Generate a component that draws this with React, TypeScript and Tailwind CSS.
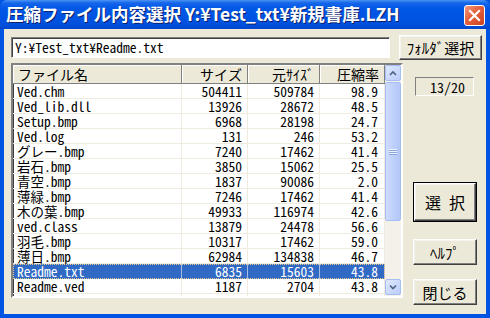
import type { ReactNode } from 'react'

type Row = { name: string; size: string; orig: string; rate: string; selected?: boolean }

const ROWS: Row[] = [
  { name: 'Ved.chm', size: '504411', orig: '509784', rate: '98.9' },
  { name: 'Ved_lib.dll', size: '13926', orig: '28672', rate: '48.5' },
  { name: 'Setup.bmp', size: '6968', orig: '28198', rate: '24.7' },
  { name: 'Ved.log', size: '131', orig: '246', rate: '53.2' },
  { name: 'グレー.bmp', size: '7240', orig: '17462', rate: '41.4' },
  { name: '岩石.bmp', size: '3850', orig: '15062', rate: '25.5' },
  { name: '青空.bmp', size: '1837', orig: '90086', rate: '2.0' },
  { name: '薄緑.bmp', size: '7246', orig: '17462', rate: '41.4' },
  { name: '木の葉.bmp', size: '49933', orig: '116974', rate: '42.6' },
  { name: 'ved.class', size: '13879', orig: '24478', rate: '56.6' },
  { name: '羽毛.bmp', size: '10317', orig: '17462', rate: '59.0' },
  { name: '薄日.bmp', size: '62984', orig: '134838', rate: '46.7' },
  { name: 'Readme.txt', size: '6835', orig: '15603', rate: '43.8', selected: true },
  { name: 'Readme.ved', size: '1187', orig: '2704', rate: '43.8' },
  { name: 'Ved.ini', size: '897', orig: '4800', rate: '18.7' },
]

const MONO = "font-['Noto_Sans_Mono_CJK_JP','Noto_Sans_CJK_JP',monospace]"

export default function App() {
  return (
    <div className={`flex h-[318px] w-[490px] flex-col overflow-hidden bg-[#0054e3] ${MONO} text-[13.5px] text-black`}>
      <TitleBar />
      <div className="mx-[4px] mb-[4px] flex flex-1 flex-col bg-[#ece9d8]">
        <div className="flex items-center pt-[6px]">
          <div className="ml-[7px] flex h-[21px] w-[379px] items-center border border-t-[#808080] border-l-[#808080] border-b-white border-r-white bg-white pl-[3px] leading-none shadow-[inset_1px_1px_0_#404040]">
            Y:¥Test_txt¥Readme.txt
          </div>
          <ClassicButton className="ml-[9px] h-[25px] w-[83px] text-[15px]">ﾌｫﾙﾀﾞ選択</ClassicButton>
        </div>
        <div className="mt-[3px] flex">
          <FileList />
          <div className="ml-[10px] flex w-[64px] flex-col">
            <div className="ml-[2px] mt-[14px] flex h-[19px] w-[59px] items-center justify-end border border-t-[#808080] border-l-[#808080] border-b-white border-r-white pr-[8px] text-[14px] leading-none">
              13/20
            </div>
            <div className="mt-[86px] flex h-[40px] w-[64px] border border-black">
              <ClassicButton className="h-full w-full text-[16px]">選 択</ClassicButton>
            </div>
            <ClassicButton className="mt-[17px] h-[26px] w-[64px] text-[15px]">ﾍﾙﾌﾟ</ClassicButton>
            <ClassicButton className="mt-[14px] h-[26px] w-[64px] text-[15px]">閉じる</ClassicButton>
          </div>
        </div>
      </div>
    </div>
  )
}

function TitleBar() {
  return (
    <div className="relative flex h-[29px] items-center rounded-t-[7px] bg-[linear-gradient(to_bottom,#4a94f5_0%,#1666ea_10%,#0058e6_28%,#0054e3_55%,#0050dc_85%,#0046cc_100%)] pl-[6px]">
      <span className="font-['Noto_Sans_CJK_JP',sans-serif] text-[17.5px] font-bold text-white [text-shadow:1px_1px_0_#0a1e6a]">
        圧縮ファイル内容選択 Y:¥Test_txt¥新規書庫.LZH
      </span>
      <div className="absolute right-[5px] top-[5px] flex h-[21px] w-[21px] items-center justify-center rounded-[3px] border border-white bg-[linear-gradient(135deg,#f29a7e_0%,#e5603c_45%,#cc4220_100%)]">
        <svg width="13" height="13" viewBox="0 0 13 13">
          <path d="M2 2 L11 11 M11 2 L2 11" stroke="white" strokeWidth="2.2" strokeLinecap="square" />
        </svg>
      </div>
    </div>
  )
}

function ClassicButton({ children, className = '' }: { children: ReactNode; className?: string }) {
  return (
    <div
      className={`flex items-center justify-center border border-t-white border-l-white border-b-[#404040] border-r-[#404040] bg-[#ece9d8] leading-none shadow-[inset_-1px_-1px_0_#808080,inset_1px_1px_0_#f4f3ee] ${className}`}
    >
      {children}
    </div>
  )
}

function FileList() {
  return (
    <div className="ml-[7px] flex h-[235px] w-[392px] overflow-hidden border-2 border-t-[#808080] border-l-[#808080] border-b-white border-r-white bg-white shadow-[inset_1px_1px_0_#404040]">
      <div className="flex w-[372px] flex-col">
        <div className="grid h-[19px] shrink-0 grid-cols-[169px_66px_72px_65px] bg-[#ece9d8]">
          <HeaderCell left>ファイル名</HeaderCell>
          <HeaderCell>サイズ</HeaderCell>
          <HeaderCell>元ｻｲｽﾞ</HeaderCell>
          <HeaderCell>圧縮率</HeaderCell>
        </div>
        {ROWS.map((r) => {
          const line = r.selected ? 'border-r border-[#a8bee6]' : 'border-r border-[#efebde]'
          return (
            <div
              key={r.name}
              className={`grid h-[15px] shrink-0 grid-cols-[169px_66px_72px_65px] leading-[15px] ${
                r.selected ? 'bg-[#316ac5] text-white outline-1 -outline-offset-1 outline-dotted outline-[#e7c98b]' : 'border-b border-[#efebde]'
              }`}
            >
              <div className={`pl-[4px] ${line}`}>{r.name}</div>
              <div className={`pr-[5px] text-right ${line}`}>{r.size}</div>
              <div className={`pr-[5px] text-right ${line}`}>{r.orig}</div>
              <div className={`pr-[6px] text-right ${line}`}>{r.rate}</div>
            </div>
          )
        })}
      </div>
      <ScrollBar />
    </div>
  )
}

function HeaderCell({ children, left }: { children: ReactNode; left?: boolean }) {
  return (
    <div
      className={`flex items-center border-b border-r border-b-[#808080] border-r-[#808080] text-[14px] leading-none shadow-[inset_1px_1px_0_white] ${
        left ? 'justify-start pl-[5px]' : 'justify-end pr-[5px]'
      }`}
    >
      {children}
    </div>
  )
}

function ScrollBar() {
  return (
    <div className="flex w-[16px] flex-col bg-[#f3f1ea]">
      <ArrowButton up />
      <div className="relative flex-1">
        <div className="absolute left-0 right-0 top-[1px] flex h-[139px] items-center justify-center rounded-[2px] border border-[#a6bdf4] bg-[linear-gradient(to_right,#cfdcfd,#bccefb_60%,#b2c6f8)]">
          <svg width="8" height="8" viewBox="0 0 8 8">
            <path d="M0 1.5 H8 M0 3.5 H8 M0 5.5 H8" stroke="#eef3ff" strokeWidth="1" />
            <path d="M0 2.5 H8 M0 4.5 H8 M0 6.5 H8" stroke="#8ca6e4" strokeWidth="1" />
          </svg>
        </div>
      </div>
      <div className="mb-[1px]">
        <ArrowButton />
      </div>
    </div>
  )
}

function ArrowButton({ up }: { up?: boolean }) {
  return (
    <div className="flex h-[16px] w-[16px] items-center justify-center rounded-[2px] border border-[#a6bdf4] bg-[linear-gradient(135deg,#dfe8fe,#bacdfa)]">
      <svg width="8" height="6" viewBox="0 0 8 6">
        <path d={up ? 'M1 5 L4 2 L7 5' : 'M1 1.5 L4 4.5 L7 1.5'} fill="none" stroke="#4d6185" strokeWidth="1.6" />
      </svg>
    </div>
  )
}
